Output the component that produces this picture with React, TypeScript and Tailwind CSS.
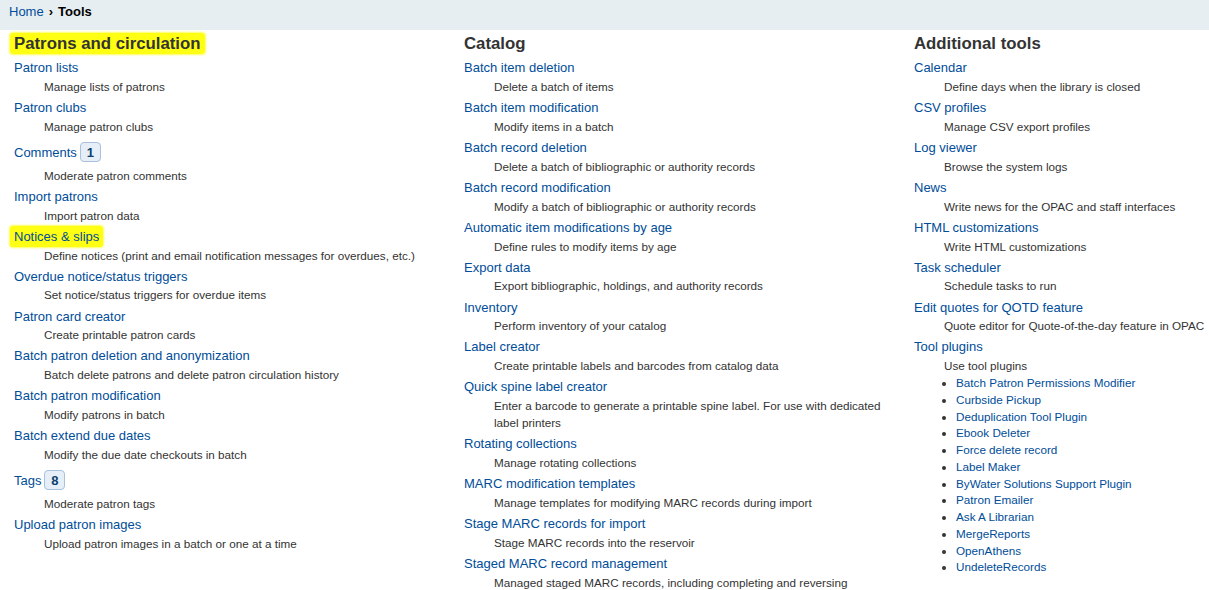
import React from 'react';

type Tool = { name: string; desc: string; badge?: string; mark?: boolean; plugins?: string[] };

const PATRONS: Tool[] = [
  { name: 'Patron lists', desc: 'Manage lists of patrons' },
  { name: 'Patron clubs', desc: 'Manage patron clubs' },
  { name: 'Comments', desc: 'Moderate patron comments', badge: '1' },
  { name: 'Import patrons', desc: 'Import patron data' },
  { name: 'Notices & slips', desc: 'Define notices (print and email notification messages for overdues, etc.)', mark: true },
  { name: 'Overdue notice/status triggers', desc: 'Set notice/status triggers for overdue items' },
  { name: 'Patron card creator', desc: 'Create printable patron cards' },
  { name: 'Batch patron deletion and anonymization', desc: 'Batch delete patrons and delete patron circulation history' },
  { name: 'Batch patron modification', desc: 'Modify patrons in batch' },
  { name: 'Batch extend due dates', desc: 'Modify the due date checkouts in batch' },
  { name: 'Tags', desc: 'Moderate patron tags', badge: '8' },
  { name: 'Upload patron images', desc: 'Upload patron images in a batch or one at a time' },
];

const CATALOG: Tool[] = [
  { name: 'Batch item deletion', desc: 'Delete a batch of items' },
  { name: 'Batch item modification', desc: 'Modify items in a batch' },
  { name: 'Batch record deletion', desc: 'Delete a batch of bibliographic or authority records' },
  { name: 'Batch record modification', desc: 'Modify a batch of bibliographic or authority records' },
  { name: 'Automatic item modifications by age', desc: 'Define rules to modify items by age' },
  { name: 'Export data', desc: 'Export bibliographic, holdings, and authority records' },
  { name: 'Inventory', desc: 'Perform inventory of your catalog' },
  { name: 'Label creator', desc: 'Create printable labels and barcodes from catalog data' },
  { name: 'Quick spine label creator', desc: 'Enter a barcode to generate a printable spine label. For use with dedicated label printers' },
  { name: 'Rotating collections', desc: 'Manage rotating collections' },
  { name: 'MARC modification templates', desc: 'Manage templates for modifying MARC records during import' },
  { name: 'Stage MARC records for import', desc: 'Stage MARC records into the reservoir' },
  { name: 'Staged MARC record management', desc: 'Managed staged MARC records, including completing and reversing' },
];

const ADDITIONAL: Tool[] = [
  { name: 'Calendar', desc: 'Define days when the library is closed' },
  { name: 'CSV profiles', desc: 'Manage CSV export profiles' },
  { name: 'Log viewer', desc: 'Browse the system logs' },
  { name: 'News', desc: 'Write news for the OPAC and staff interfaces' },
  { name: 'HTML customizations', desc: 'Write HTML customizations' },
  { name: 'Task scheduler', desc: 'Schedule tasks to run' },
  { name: 'Edit quotes for QOTD feature', desc: 'Quote editor for Quote-of-the-day feature in OPAC' },
  {
    name: 'Tool plugins',
    desc: 'Use tool plugins',
    plugins: [
      'Batch Patron Permissions Modifier',
      'Curbside Pickup',
      'Deduplication Tool Plugin',
      'Ebook Deleter',
      'Force delete record',
      'Label Maker',
      'ByWater Solutions Support Plugin',
      'Patron Emailer',
      'Ask A Librarian',
      'MergeReports',
      'OpenAthens',
      'UndeleteRecords',
    ],
  },
];

// highlighter-pen look used on a couple of items
const MARK = '-mx-[4px] rounded-[3px] bg-[#ffff14] px-[4px] py-[1px] shadow-[0_0_2px_1px_#ffff5a]';

function Section({ title, tools, mark }: { title: string; tools: Tool[]; mark?: boolean }) {
  return (
    <div className="w-[420px] shrink-0">
      <h3 className="mb-[4px] text-[16.8px] font-bold leading-[20px] text-[#333]">
        <span className={mark ? MARK : ''}>{title}</span>
      </h3>
      <dl>
        {tools.map((t) => (
          <div key={t.name}>
            <dt className={`flex items-center text-[13px] ${t.badge ? 'h-[29px]' : 'h-[20px]'}`}>
              <a href="#" className={`text-[#004d99] ${t.mark ? MARK : ''}`}>{t.name}</a>
              {t.badge && (
                <span className="ml-[3px] flex h-[20px] min-w-[21px] items-center justify-center rounded-[4px] border border-[#a9c1dc] bg-[#e6eef7] px-[5px] text-[13px] font-bold text-[#0c3e6e]">
                  {t.badge}
                </span>
              )}
            </dt>
            <dd className="pb-[2.9px] pl-[30px] text-[11.7px] leading-[17px] text-[#333]">
              {t.desc}
              {t.plugins && (
                <ul className="mt-[1px] list-disc pl-[12px] text-[11.7px] leading-[16.75px]">
                  {t.plugins.map((p) => (
                    <li key={p} className="marker:text-[#333]">
                      <a href="#" className="text-[#004d99]">{p}</a>
                    </li>
                  ))}
                </ul>
              )}
            </dd>
          </div>
        ))}
      </dl>
    </div>
  );
}

export default function App() {
  return (
    <div className="min-h-[590px] w-[1209px] overflow-hidden bg-white font-['Liberation_Sans',Arial,sans-serif] text-[#333]">
      <nav className="h-[30px] bg-[#e6eef1] px-[9px] pt-[4px] text-[13px] leading-[16px]">
        <a href="#" className="text-[#004d99]">Home</a>
        <span className="mx-[5px] font-bold text-black">›</span>
        <span className="font-bold text-black">Tools</span>
      </nav>
      <div className="flex gap-[30px] pl-[14px] pt-[4px]">
        <Section title="Patrons and circulation" tools={PATRONS} mark />
        <Section title="Catalog" tools={CATALOG} />
        <Section title="Additional tools" tools={ADDITIONAL} />
      </div>
    </div>
  );
}
